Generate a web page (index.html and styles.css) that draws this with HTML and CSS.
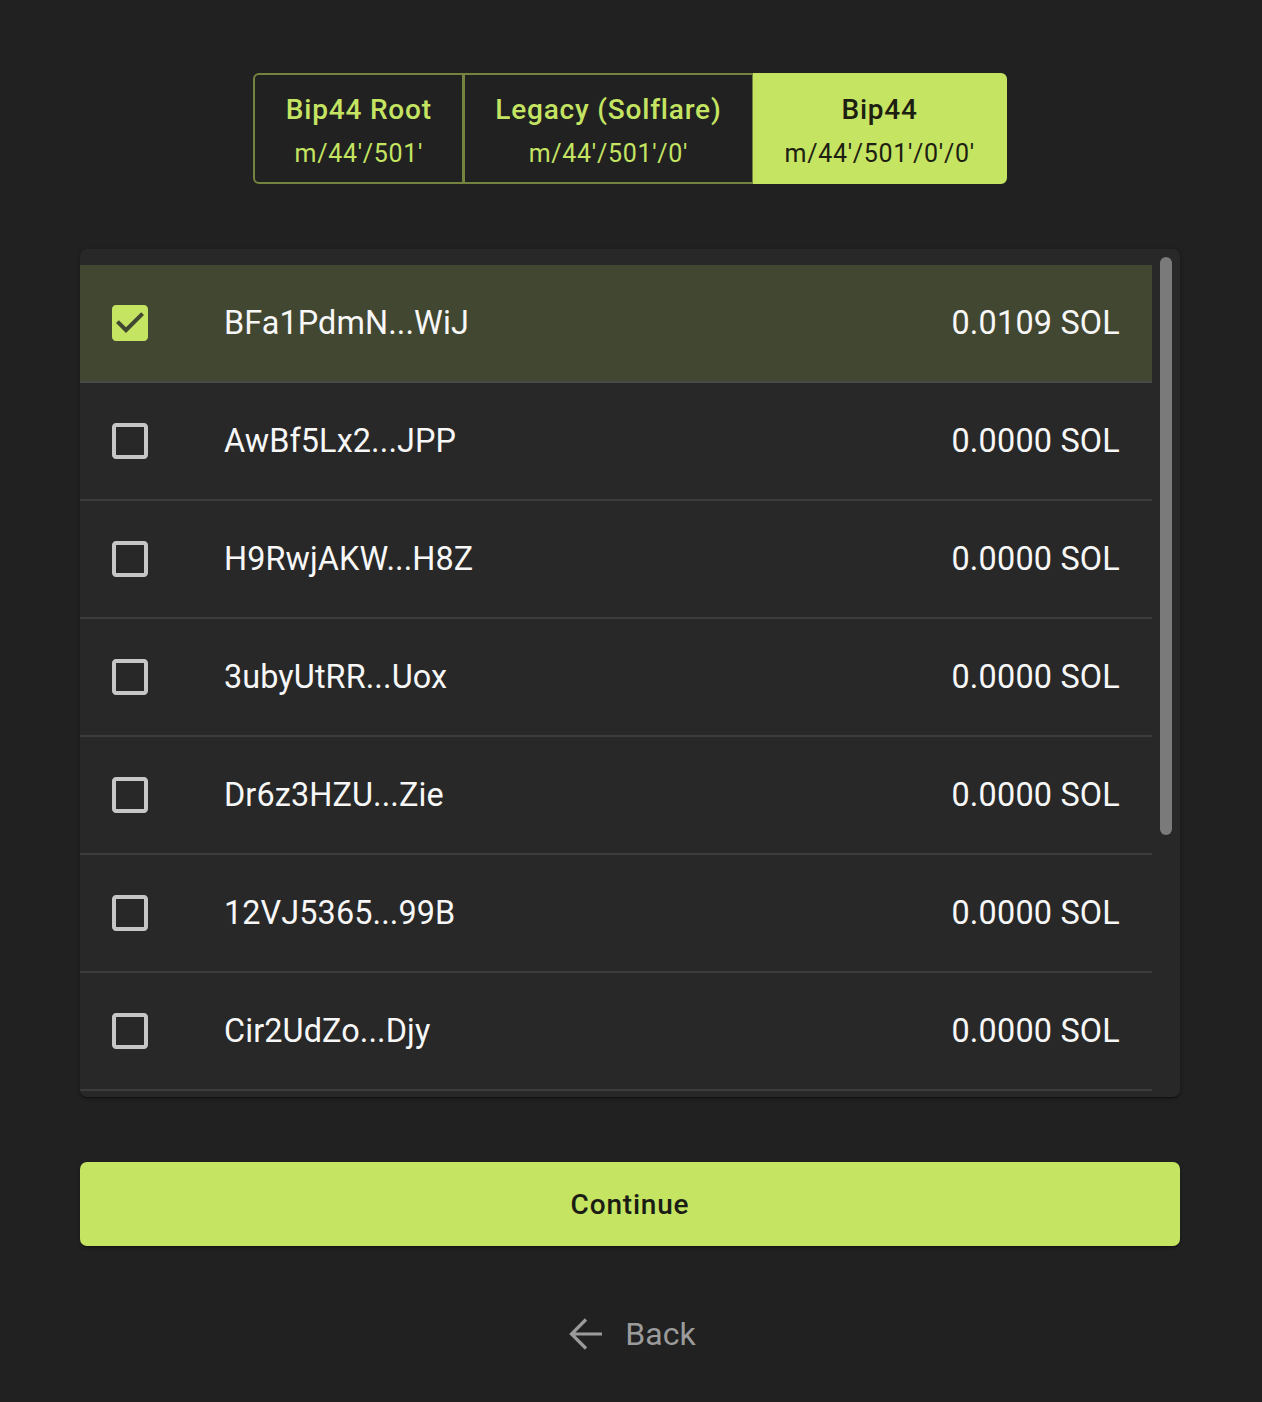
FILE: index.html
```html
<!DOCTYPE html>
<html lang="en">
<head>
<meta charset="utf-8">
<title>Select accounts</title>
<link rel="stylesheet" href="styles.css">
</head>
<body>
<main class="page">
  <div class="paths">
    <button class="path">
      <span class="path-title">Bip44 Root</span>
      <span class="path-sub">m/44'/501'</span>
    </button>
    <button class="path">
      <span class="path-title">Legacy (Solflare)</span>
      <span class="path-sub">m/44'/501'/0'</span>
    </button>
    <button class="path path-active">
      <span class="path-title">Bip44</span>
      <span class="path-sub">m/44'/501'/0'/0'</span>
    </button>
  </div>

  <section class="card">
    <ul class="accounts">
      <li class="account account-selected">
        <svg class="cb cb-on" viewBox="0 0 24 24"><path d="M19 3H5c-1.11 0-2 .9-2 2v14c0 1.1.89 2 2 2h14c1.11 0 2-.9 2-2V5c0-1.1-.89-2-2-2zm-9 14l-5-5 1.41-1.41L10 14.170l7.59-7.59L19 8l-9 9z"/></svg>
        <span class="addr">BFa1PdmN...WiJ</span>
        <span class="bal">0.0109 SOL</span>
      </li>
      <li class="account">
        <svg class="cb" viewBox="0 0 24 24"><path d="M19 5v14H5V5h14m0-2H5c-1.1 0-2 .9-2 2v14c0 1.1.9 2 2 2h14c1.1 0 2-.9 2-2V5c0-1.1-.9-2-2-2z"/></svg>
        <span class="addr">AwBf5Lx2...JPP</span>
        <span class="bal">0.0000 SOL</span>
      </li>
      <li class="account">
        <svg class="cb" viewBox="0 0 24 24"><path d="M19 5v14H5V5h14m0-2H5c-1.1 0-2 .9-2 2v14c0 1.1.9 2 2 2h14c1.1 0 2-.9 2-2V5c0-1.1-.9-2-2-2z"/></svg>
        <span class="addr">H9RwjAKW...H8Z</span>
        <span class="bal">0.0000 SOL</span>
      </li>
      <li class="account">
        <svg class="cb" viewBox="0 0 24 24"><path d="M19 5v14H5V5h14m0-2H5c-1.1 0-2 .9-2 2v14c0 1.1.9 2 2 2h14c1.1 0 2-.9 2-2V5c0-1.1-.9-2-2-2z"/></svg>
        <span class="addr">3ubyUtRR...Uox</span>
        <span class="bal">0.0000 SOL</span>
      </li>
      <li class="account">
        <svg class="cb" viewBox="0 0 24 24"><path d="M19 5v14H5V5h14m0-2H5c-1.1 0-2 .9-2 2v14c0 1.1.9 2 2 2h14c1.1 0 2-.9 2-2V5c0-1.1-.9-2-2-2z"/></svg>
        <span class="addr">Dr6z3HZU...Zie</span>
        <span class="bal">0.0000 SOL</span>
      </li>
      <li class="account">
        <svg class="cb" viewBox="0 0 24 24"><path d="M19 5v14H5V5h14m0-2H5c-1.1 0-2 .9-2 2v14c0 1.1.9 2 2 2h14c1.1 0 2-.9 2-2V5c0-1.1-.9-2-2-2z"/></svg>
        <span class="addr">12VJ5365...99B</span>
        <span class="bal">0.0000 SOL</span>
      </li>
      <li class="account">
        <svg class="cb" viewBox="0 0 24 24"><path d="M19 5v14H5V5h14m0-2H5c-1.1 0-2 .9-2 2v14c0 1.1.9 2 2 2h14c1.1 0 2-.9 2-2V5c0-1.1-.9-2-2-2z"/></svg>
        <span class="addr">Cir2UdZo...Djy</span>
        <span class="bal">0.0000 SOL</span>
      </li>
    </ul>
    <div class="rail"><div class="thumb"></div></div>
  </section>

  <button class="continue">Continue</button>

  <button class="back">
    <svg class="back-icon" viewBox="0 0 36 36"><path d="M34 18H3.5M18 3.5L3.5 18L18 32.5" fill="none" stroke="currentColor" stroke-width="3.2" stroke-linejoin="miter"/></svg>
    <span>Back</span>
  </button>
</main>
</body>
</html>
```

FILE: styles.css
```css
* { box-sizing: border-box; }

html, body {
  margin: 0;
  padding: 0;
  background: #212121;
}

body {
  font-family: Roboto, "Liberation Sans", sans-serif;
  color: #ffffff;
  height: 1402px;
  overflow: hidden;
}

.page {
  display: flex;
  flex-direction: column;
  align-items: center;
  padding: 73px 2px 0 0;
}

.paths {
  display: flex;
}

.path {
  display: flex;
  flex-direction: column;
  align-items: center;
  padding: 17px 30px 12px;
  background: transparent;
  border: 2px solid #74843f;
  color: #c4e462;
  font-family: inherit;
  cursor: pointer;
  margin: 0;
}

.path + .path {
  margin-left: -1px;
}

.path:first-child {
  border-radius: 6px 0 0 6px;
  padding-left: 30.5px;
  padding-right: 30.5px;
}

.path:last-child {
  border-radius: 0 6px 6px 0;
}

.path-title {
  font-size: 28px;
  font-weight: 500;
  letter-spacing: 0.8px;
  line-height: 36px;
}

.path-sub {
  font-size: 25px;
  font-weight: 400;
  letter-spacing: 0.7px;
  line-height: 32px;
  margin-top: 10px;
}

.path-active {
  background: #c4e462;
  border-color: #c4e462;
  color: #1d2011;
}

.card {
  display: flex;
  margin-top: 65px;
  width: 1100px;
  height: 848px;
  background: #282828;
  border-radius: 7px;
  box-shadow: 0 2px 1px -1px rgba(0,0,0,0.2), 0 1px 1px rgba(0,0,0,0.14), 0 1px 4px rgba(0,0,0,0.3);
  overflow: hidden;
}

.accounts {
  flex: 1;
  list-style: none;
  margin: 0;
  padding: 16px 0 0;
  overflow: hidden;
}

.rail {
  width: 28px;
  flex: none;
  padding: 8px;
}

.thumb {
  height: 578px;
  background: #7a7a7a;
  border-radius: 6px;
}

.account {
  display: flex;
  align-items: center;
  height: 118px;
  padding: 0 32px 0 26px;
  border-bottom: 2px solid #3c3c3c;
  font-size: 32.4px;
  line-height: 40px;
}

.account-selected {
  background: #424731;
  border-bottom-color: #4a4a4a;
}

.cb {
  width: 48px;
  height: 48px;
  flex: none;
  fill: #c6c6c6;
}

.cb-on {
  fill: #c4e462;
}

.addr {
  margin-left: 70px;
  flex: 1;
  color: #f7f7f7;
  letter-spacing: 0.1px;
}

.bal {
  color: #f7f7f7;
  letter-spacing: 0.2px;
}

.continue {
  margin-top: 65px;
  width: 1100px;
  height: 84px;
  border: none;
  border-radius: 7px;
  background: #c4e462;
  color: #1b1d14;
  font-family: inherit;
  font-size: 28px;
  font-weight: 500;
  letter-spacing: 0.8px;
  box-shadow: 0 3px 1px -2px rgba(0,0,0,0.2), 0 2px 2px rgba(0,0,0,0.14), 0 1px 5px rgba(0,0,0,0.12);
  cursor: pointer;
}

.back {
  margin-top: 64px;
  display: flex;
  align-items: center;
  gap: 21px;
  height: 48px;
  padding: 0;
  background: transparent;
  border: none;
  color: #9b9b9b;
  font-family: inherit;
  font-size: 32px;
  cursor: pointer;
}

.back-icon {
  width: 36px;
  height: 36px;
  margin-left: 4px;
}
```
